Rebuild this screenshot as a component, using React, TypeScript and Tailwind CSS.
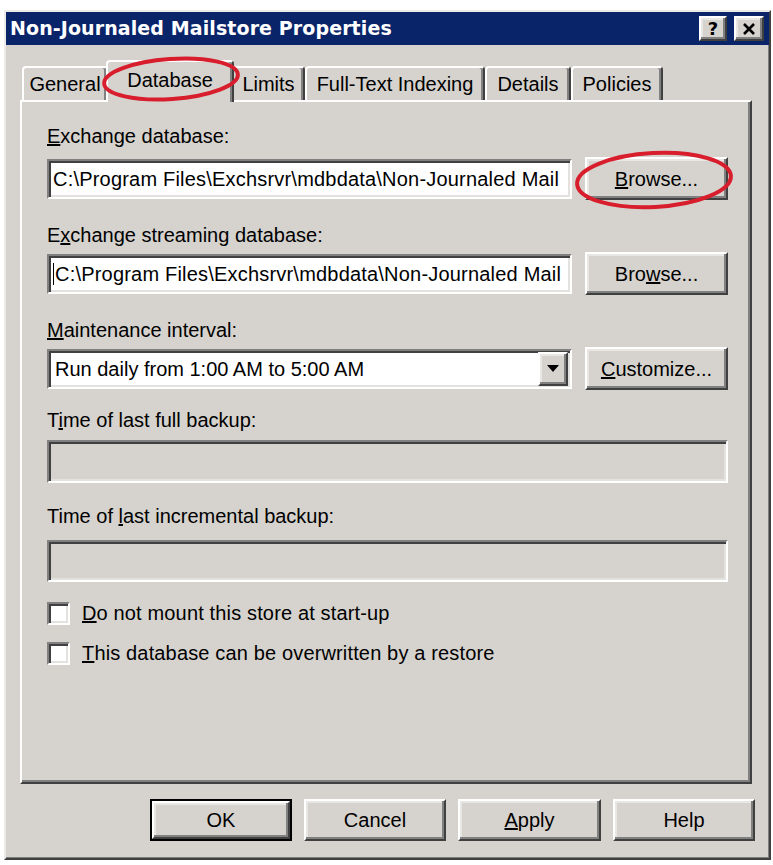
import React from "react";

const FACE = "bg-[#d6d3ce]";
const RAISED =
  "border-2 border-t-white border-l-white border-r-[#404040] border-b-[#404040] shadow-[inset_-2px_-2px_0_#808080,inset_2px_2px_0_#e9e7e3]";
const SUNKEN =
  "border-2 border-t-[#808080] border-l-[#808080] border-r-white border-b-white shadow-[inset_2px_2px_0_#404040,inset_-2px_-2px_0_#e4e2de]";

function Btn({ children, w = "w-[143px]", h = "h-[43px]" }: { children: React.ReactNode; w?: string; h?: string }) {
  return (
    <div className={`${w} ${h} ${RAISED} ${FACE} flex items-center justify-center text-[20px] text-black`}>
      {children}
    </div>
  );
}

function Field({ children, caret = false }: { children: React.ReactNode; caret?: boolean }) {
  return (
    <div className={`w-[525px] h-[40px] ${SUNKEN} bg-white flex items-center pl-[4px] text-[20px] tracking-[0.2px] text-black whitespace-nowrap overflow-hidden`}>
      {caret && <span className="w-[1px] h-[22px] bg-black mr-[1px]" />}
      {children}
    </div>
  );
}

function Label({ children, mt }: { children: React.ReactNode; mt: string }) {
  return <div className={`${mt} h-[23px] leading-[23px] text-[20px] text-black`}>{children}</div>;
}

function Tab({ label, w, selected = false }: { label: React.ReactNode; w: string; selected?: boolean }) {
  const base =
    "border-t-2 border-l-2 border-r-2 border-t-white border-l-white border-r-[#404040] rounded-t-[4px] shadow-[inset_-2px_0_0_#808080] flex justify-center text-[20px] text-black";
  return selected ? (
    <div className={`${w} h-[42px] -mx-[2px] -mb-[2px] relative z-10 ${FACE} ${base} items-center pb-[4px]`}>{label}</div>
  ) : (
    <div className={`${w} h-[34px] ${FACE} ${base} items-center`}>{label}</div>
  );
}

function Check({ children, mt }: { children: React.ReactNode; mt: string }) {
  return (
    <div className={`${mt} flex items-center h-[23px]`}>
      <div className={`w-[23px] h-[23px] ${SUNKEN} bg-white`} />
      <div className="ml-[12px] text-[20px] leading-[23px] tracking-[0.15px] text-black">{children}</div>
    </div>
  );
}

export default function App() {
  const path = "C:\\Program Files\\Exchsrvr\\mdbdata\\Non-Journaled Mail";
  return (
    <div className="relative w-[773px] h-[865px] bg-white overflow-hidden font-['Liberation_Sans',Arial,sans-serif]">
      <div className="pt-[10px] pl-[4px]">
        {/* dialog window */}
        <div className={`w-[767px] h-[850px] ${FACE} border-2 border-t-[#ecebe8] border-l-[#ecebe8] border-r-[#404040] border-b-[#404040] shadow-[inset_-1px_-1px_0_#808080] flex flex-col`}>
          {/* caption */}
          <div className="h-[33px] bg-[#0a246a] flex items-center pl-[4px] pr-[5px]">
            <div className="flex-1 text-white font-bold text-[19px] font-['DejaVu_Sans',Verdana,sans-serif] tracking-[0.1px]">
              Non-Journaled Mailstore Properties
            </div>
            <div className={`w-[28px] h-[25px] ${RAISED} ${FACE} flex items-center justify-center text-[18px] font-bold text-black font-['DejaVu_Sans',sans-serif]`}>
              ?
            </div>
            <div className={`ml-[7px] w-[30px] h-[25px] ${RAISED} ${FACE} flex items-center justify-center`}>
              <svg width="14" height="12" viewBox="0 0 14 12">
                <path d="M2 1 L12 11 M12 1 L2 11" stroke="#000" strokeWidth="2.6" />
              </svg>
            </div>
          </div>

          {/* tab strip */}
          <div className="h-[55px] flex items-end pl-[16px]">
            <Tab w="w-[86px]" label="General" />
            <Tab w="w-[128px]" selected label="Database" />
            <Tab w="w-[73px]" label="Limits" />
            <Tab w="w-[180px]" label="Full-Text Indexing" />
            <Tab w="w-[86px]" label="Details" />
            <Tab w="w-[92px]" label="Policies" />
          </div>

          {/* tab page */}
          <div className="ml-[14px] w-[732px] h-[684px] border-2 border-t-white border-l-white border-r-[#404040] border-b-[#404040] shadow-[inset_-2px_-2px_0_#808080] pl-[25px] pt-[23px] flex flex-col">
            <Label mt="mt-0">
              <u>E</u>xchange database:
            </Label>
            <div className="mt-[9px] flex items-center gap-[13px] h-[43px]">
              <Field>{path}</Field>
              <Btn>
                <span>
                  <u>B</u>rowse...
                </span>
              </Btn>
            </div>

            <Label mt="mt-[24px]">
              E<u>x</u>change streaming database:
            </Label>
            <div className="mt-[5px] flex items-center gap-[13px] h-[43px]">
              <Field caret>{path}</Field>
              <Btn>
                <span>
                  Bro<u>w</u>se...
                </span>
              </Btn>
            </div>

            <Label mt="mt-[24px]">
              <u>M</u>aintenance interval:
            </Label>
            <div className="mt-[5px] flex items-center gap-[13px] h-[43px]">
              <div className={`w-[525px] h-[40px] ${SUNKEN} bg-white flex items-center pl-[6px] pr-[2px] text-[20px] text-black`}>
                <div className="flex-1 whitespace-nowrap">Run daily from 1:00 AM to 5:00 AM</div>
                <div className={`w-[30px] h-[34px] ${RAISED} ${FACE} flex items-center justify-center`}>
                  <svg width="12" height="7" viewBox="0 0 12 7">
                    <path d="M0 0 H12 L6 7 Z" fill="#000" />
                  </svg>
                </div>
              </div>
              <Btn>
                <span>
                  <u>C</u>ustomize...
                </span>
              </Btn>
            </div>

            <Label mt="mt-[19px]">
              T<u>i</u>me of last full backup:
            </Label>
            <div className={`mt-[8px] w-[681px] h-[43px] ${SUNKEN} ${FACE}`} />

            <Label mt="mt-[22px]">
              Time of <u>l</u>ast incremental backup:
            </Label>
            <div className={`mt-[12px] w-[681px] h-[42px] ${SUNKEN} ${FACE}`} />

            <Check mt="mt-[20px]">
              <u>D</u>o not mount this store at start-up
            </Check>
            <Check mt="mt-[17px]">
              <u>T</u>his database can be overwritten by a restore
            </Check>
          </div>

          {/* dialog buttons */}
          <div className="mt-[15px] flex justify-end gap-[12px] pr-[14px]">
            <div className="w-[142px] h-[42px] border-2 border-black">
              <Btn w="w-full" h="h-full">OK</Btn>
            </div>
            <Btn w="w-[142px]" h="h-[42px]">Cancel</Btn>
            <Btn w="w-[143px]" h="h-[42px]">
              <span>
                <u>A</u>pply
              </span>
            </Btn>
            <Btn w="w-[142px]" h="h-[42px]">Help</Btn>
          </div>
        </div>
      </div>

      {/* red hand-drawn highlight rings */}
      <svg className="absolute inset-0 z-20 pointer-events-none" width="773" height="865" viewBox="0 0 773 865">
        <ellipse cx="171" cy="79" rx="67" ry="20" transform="rotate(-4 171 79)" fill="none" stroke="#d81e2c" strokeWidth="4" />
        <ellipse cx="654" cy="180" rx="77" ry="27" transform="rotate(-3 654 180)" fill="none" stroke="#d81e2c" strokeWidth="4" />
      </svg>
    </div>
  );
}
